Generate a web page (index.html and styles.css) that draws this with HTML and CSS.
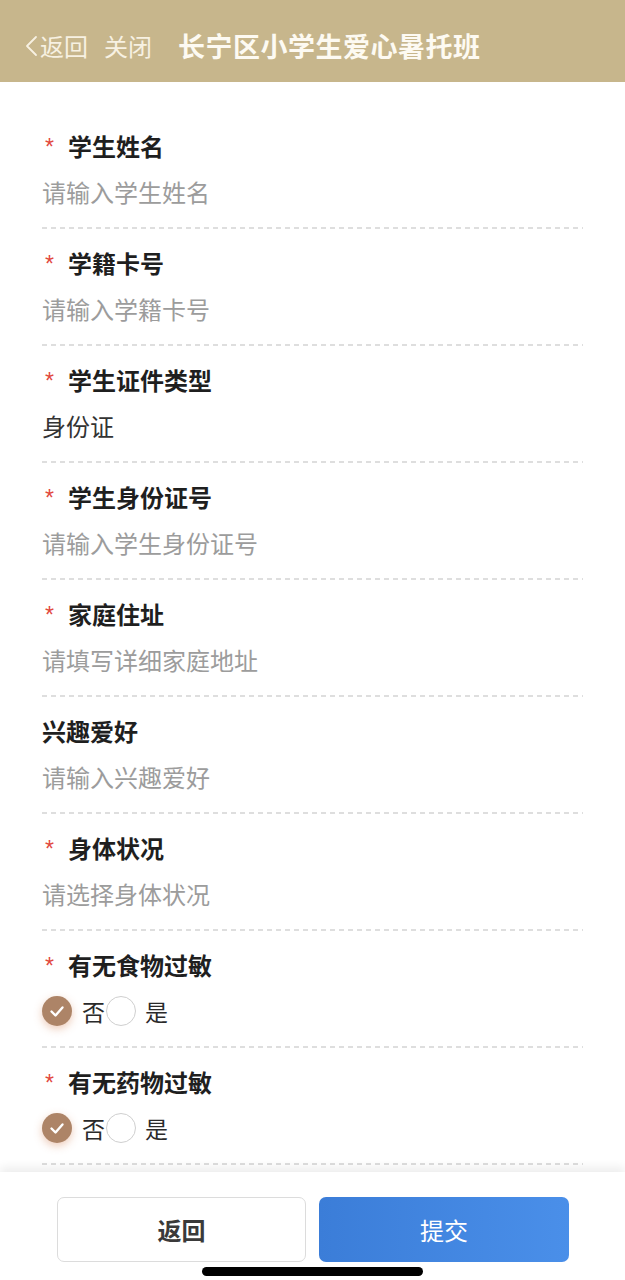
FILE: index.html
```html
<!DOCTYPE html>
<html lang="zh-CN">
<head>
<meta charset="utf-8">
<title>长宁区小学生爱心暑托班</title>
<link rel="stylesheet" href="styles.css">
</head>
<body>
<div class="page">
  <header class="topbar">
    <div class="nav">
      <span class="back">
        <svg class="chev" width="13" height="22" viewBox="0 0 13 22"><path d="M11 2 L2 11 L11 20" fill="none" stroke="currentColor" stroke-width="1.8" stroke-linecap="round" stroke-linejoin="round"/></svg>
        返回
      </span>
      <span class="close">关闭</span>
    </div>
    <h1 class="title">长宁区小学生爱心暑托班</h1>
  </header>

  <main class="content">
    <div class="form">
      <div class="row">
        <div class="label"><span class="req">*</span>学生姓名</div>
        <div class="value placeholder">请输入学生姓名</div>
      </div>
      <div class="row">
        <div class="label"><span class="req">*</span>学籍卡号</div>
        <div class="value placeholder">请输入学籍卡号</div>
      </div>
      <div class="row">
        <div class="label"><span class="req">*</span>学生证件类型</div>
        <div class="value">身份证</div>
      </div>
      <div class="row">
        <div class="label"><span class="req">*</span>学生身份证号</div>
        <div class="value placeholder">请输入学生身份证号</div>
      </div>
      <div class="row">
        <div class="label"><span class="req">*</span>家庭住址</div>
        <div class="value placeholder">请填写详细家庭地址</div>
      </div>
      <div class="row">
        <div class="label">兴趣爱好</div>
        <div class="value placeholder">请输入兴趣爱好</div>
      </div>
      <div class="row">
        <div class="label"><span class="req">*</span>身体状况</div>
        <div class="value placeholder">请选择身体状况</div>
      </div>
      <div class="row">
        <div class="label"><span class="req">*</span>有无食物过敏</div>
        <div class="value radios">
          <span class="radio checked"><svg width="30" height="30" viewBox="0 0 30 30"><path d="M9.5 15.5 L13.5 19.5 L20.5 11.5" fill="none" stroke="#fff" stroke-width="2.4" stroke-linecap="round" stroke-linejoin="round"/></svg></span>
          <span class="opt first">否</span>
          <span class="radio"></span>
          <span class="opt second">是</span>
        </div>
      </div>
      <div class="row">
        <div class="label"><span class="req">*</span>有无药物过敏</div>
        <div class="value radios">
          <span class="radio checked"><svg width="30" height="30" viewBox="0 0 30 30"><path d="M9.5 15.5 L13.5 19.5 L20.5 11.5" fill="none" stroke="#fff" stroke-width="2.4" stroke-linecap="round" stroke-linejoin="round"/></svg></span>
          <span class="opt first">否</span>
          <span class="radio"></span>
          <span class="opt second">是</span>
        </div>
      </div>
    </div>
  </main>

  <footer class="footer">
    <button class="btn btn-back">返回</button>
    <button class="btn btn-submit">提交</button>
    <div class="home-indicator"></div>
  </footer>
</div>
</body>
</html>
```

FILE: styles.css
```css
* { box-sizing: border-box; }
html, body {
  margin: 0;
  padding: 0;
  background: #fff;
}
body {
  font-family: "Noto Sans CJK SC", "Noto Sans", sans-serif;
  color: #222;
}
.page {
  width: 625px;
  height: 1280px;
  display: flex;
  flex-direction: column;
  overflow: hidden;
}
.topbar {
  height: 82px;
  flex: 0 0 82px;
  background: #c7b68c;
  display: flex;
  align-items: center;
  padding: 10px 0 0 25px;
  color: #f7f1e2;
}
.nav {
  display: flex;
  align-items: center;
  font-size: 24px;
  line-height: 30px;
}
.back {
  display: flex;
  align-items: center;
}
.chev {
  margin-right: 2px;
}
.close {
  margin-left: 16px;
}
.title {
  margin: 0 0 0 26px;
  font-size: 27px;
  font-weight: 700;
  line-height: 30px;
  color: #fdfaf2;
  letter-spacing: 0.5px;
}
.content {
  flex: 1 1 auto;
  overflow: hidden;
  background: #fff;
}
.form {
  padding: 30px 42px 0 42px;
}
.row {
  padding: 19px 0 22px 0;
  background-image: linear-gradient(to right, #dedede 55%, rgba(255,255,255,0) 55%);
  background-size: 9px 2px;
  background-repeat: repeat-x;
  background-position: left bottom;
}
.label {
  font-size: 24px;
  line-height: 30px;
  height: 30px;
  font-weight: 700;
  color: #1f1f1f;
  display: flex;
  align-items: center;
}
.req {
  display: inline-block;
  width: 26px;
  padding-left: 3px;
  color: #e2483e;
  font-family: "Liberation Sans", sans-serif;
  font-weight: 400;
  font-size: 23px;
  line-height: 30px;
  align-self: flex-start;
  margin-top: 1px;
}
.value {
  margin-top: 16px;
  font-size: 24px;
  line-height: 30px;
  height: 30px;
  color: #333;
}
.placeholder {
  color: #9c9c9c;
}
.radios {
  display: flex;
  align-items: center;
}
.radio {
  width: 30px;
  height: 30px;
  border-radius: 50%;
  border: 1px solid #cfcfcf;
  background: #fff;
  display: inline-flex;
  flex: 0 0 30px;
}
.radio.checked {
  border: none;
  background: #ad8467;
  box-shadow: 0 3px 8px rgba(214, 140, 100, 0.45);
}
.opt {
  color: #2a2a2a;
  font-size: 23px;
}
.opt.first {
  margin-left: 10px;
  margin-right: 1px;
}
.opt.second {
  margin-left: 9px;
}
.footer {
  position: relative;
  z-index: 2;
  flex: 0 0 108px;
  height: 108px;
  background: #fff;
  box-shadow: 0 -5px 9px rgba(0, 0, 0, 0.07);
  display: flex;
  gap: 13px;
  padding: 25px 56px 0 57px;
}
.btn {
  width: 249px;
  height: 65px;
  border-radius: 7px;
  font-family: "Noto Sans CJK SC", sans-serif;
  font-size: 24px;
  cursor: pointer;
}
.btn-back {
  background: #fff;
  border: 1px solid #dcdcdc;
  color: #3a3a3a;
  font-weight: 700;
}
.btn-submit {
  width: 250px;
  border: none;
  background: linear-gradient(to right, #3b7dd8, #4a8fe9);
  color: #fff;
}
.home-indicator {
  position: absolute;
  left: 202px;
  bottom: 4px;
  width: 221px;
  height: 9px;
  border-radius: 5px;
  background: #000;
}
```
